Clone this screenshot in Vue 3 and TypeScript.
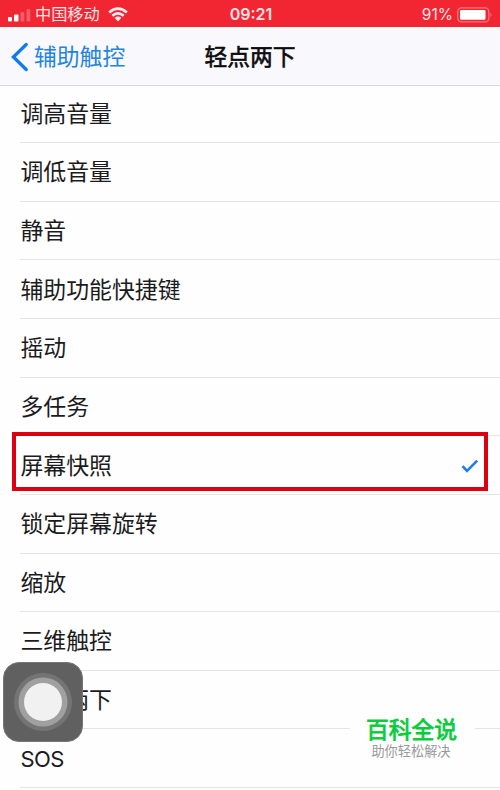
<script setup lang="ts">
import { ref } from 'vue'

const options: string[] = [
  '调高音量', '调低音量', '静音', '辅助功能快捷键', '摇动', '多任务',
  '屏幕快照', '锁定屏幕旋转', '缩放', '三维触控', '轻点两下', 'SOS',
]
const selected = ref('屏幕快照')
</script>

<template>
  <main class="screen">
    <header class="status">
      <div class="carrier">
        <svg class="signal" width="23" height="13" viewBox="0 0 23 13">
          <rect x="0" y="8" width="4" height="4.5" rx="1" fill="#fff" />
          <rect x="6" y="5.5" width="4.5" height="7" rx="1" fill="#fff" />
          <rect x="12.5" y="3" width="3.8" height="9.5" rx="1" fill="#f65a65" />
          <rect x="18.5" y="0" width="3.8" height="12.5" rx="1" fill="#f65a65" />
        </svg>
        <span class="operator">中国移动</span>
        <svg class="wifi" width="20" height="15" viewBox="0 0 20 15">
          <g fill="none" stroke="#ffeef0" stroke-width="2.6">
            <path d="M1.2 5.4 Q10 -2 18.8 5.4" />
            <path d="M4.3 8.8 Q10 4.1 15.7 8.8" />
          </g>
          <path d="M6.6 10.8 Q10 8.4 13.4 10.8 L10 14.4 Z" fill="#ffeef0" />
        </svg>
      </div>
      <time class="clock">09:21</time>
      <div class="power">
        <span>91%</span>
        <svg width="36" height="16" viewBox="0 0 36 16">
          <rect x="0.8" y="0.8" width="31" height="14" rx="3.6" fill="none" stroke="#f87780" stroke-width="1.3" />
          <rect x="3" y="3" width="25.5" height="9.7" rx="1.2" fill="#fff" />
          <path d="M33.6 5.4 Q35.4 7.8 33.6 10.2 Z" fill="#fa8b91" />
        </svg>
      </div>
    </header>

    <nav class="nav">
      <a class="back">
        <svg width="18" height="30" viewBox="0 0 18 30">
          <path d="M15.2 2.5 L2.4 15 L15.2 27.5" fill="none" stroke="#0c7dec" stroke-width="3.3" stroke-linecap="round" />
        </svg>
        <span>辅助触控</span>
      </a>
      <h1>轻点两下</h1>
    </nav>

    <ul class="list">
      <li v-for="item in options" :key="item" @click="selected = item">
        <span :class="{ latin: item === 'SOS' }">{{ item }}</span>
        <svg v-if="item === selected" class="check" width="18" height="14" viewBox="0 0 18 14">
          <path d="M1.5 7.2 L6 12 L16.2 1.7" fill="none" stroke="#1d7fe0" stroke-width="2.6" />
        </svg>
      </li>
    </ul>

    <div class="highlight"></div>
    <aside class="brand">
      <strong>百科全说</strong>
      <small>助你轻松解决</small>
    </aside>
    <button class="assist" aria-label="AssistiveTouch"><i></i></button>
  </main>
</template>

<style>
body {
  margin: 0;
  overflow: hidden;
}
</style>

<style scoped>
.screen {
  position: relative;
  width: 500px;
  height: 790px;
  overflow: hidden;
  background: #fefefe;
  color: #1b1b1d;
  font-family: "Liberation Sans", "Noto Sans CJK SC", sans-serif;
}
.status {
  display: grid;
  grid-template-columns: 1fr auto 1fr;
  align-items: center;
  height: 27px;
  padding: 0 7px 0 8px;
  box-sizing: border-box;
  background: #f12632;
  color: #ffe3e5;
}
.carrier,
.power {
  display: flex;
  align-items: center;
}
.signal {
  margin-top: 2px;
}
.operator {
  margin-left: 4px;
  font-size: 16.2px;
  line-height: 27px;
}
.wifi {
  margin-left: 8px;
}
.clock {
  margin-left: 1px;
  font: 600 16px/27px Inter, sans-serif;
  padding-top: 1px;
}
.power {
  justify-content: flex-end;
  gap: 4px;
  font: 400 15.5px/27px Inter, sans-serif;
  padding-top: 1px;
}
.nav {
  display: grid;
  grid-template-columns: 1fr auto 1fr;
  align-items: center;
  height: 59px;
  padding: 2px 0 0 11px;
  box-sizing: border-box;
  border-bottom: 1px solid #d8d8db;
  background: #f9f8fc;
}
.back {
  display: flex;
  align-items: center;
  gap: 5px;
  color: #2384e0;
  font-size: 22.8px;
  line-height: 34px;
}
.nav h1 {
  margin: 0 11px 0 0;
  color: #0c0c0e;
  font-size: 22.8px;
  font-weight: 400;
  line-height: 34px;
  -webkit-text-stroke: 0.6px currentColor;
}
.list {
  margin: -1.5px 0 0;
  padding: 0 0 0 20px;
  list-style: none;
}
.list li {
  display: flex;
  align-items: center;
  justify-content: space-between;
  height: 58.64px;
  padding: 1px 21px 0 0;
  box-sizing: border-box;
  border-bottom: 1px solid #e4e4e6;
  font-size: 22.9px;
  line-height: 34px;
}
.list li span {
  margin-left: 0.4px;
}
.list li .latin {
  font-family: Inter, sans-serif;
  font-size: 22px;
  letter-spacing: -0.6px;
}
.highlight {
  position: absolute;
  left: 12px;
  top: 432px;
  width: 476px;
  height: 59px;
  box-sizing: border-box;
  border: 4px solid #dc0010;
}
.brand {
  position: absolute;
  left: 350px;
  top: 713px;
  width: 125px;
  height: 54px;
  display: flex;
  flex-direction: column;
  align-items: center;
  background: #fefefe;
}
.brand strong {
  margin-right: 2px;
  color: #06cc3a;
  font-size: 22.8px;
  font-weight: 400;
  line-height: 34px;
  -webkit-text-stroke: 0.8px currentColor;
}
.brand small {
  margin-right: 3px;
  color: #999;
  font-size: 13.2px;
  line-height: 10px;
}
.assist {
  position: absolute;
  left: 3px;
  top: 662px;
  width: 80px;
  height: 80px;
  display: grid;
  place-items: center;
  padding: 0;
  border: 1px solid #777;
  border-radius: 16px;
  background: #606060;
}
.assist i {
  width: 38px;
  height: 38px;
  border-radius: 50%;
  background: #f1f1f1;
  box-shadow: 0 0 0 5.5px #a0a0a0, 0 0 0 10px #747474;
}
</style>
